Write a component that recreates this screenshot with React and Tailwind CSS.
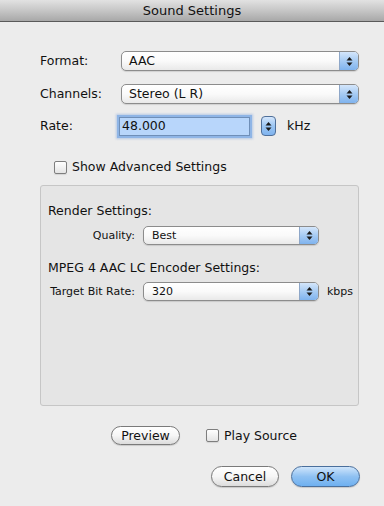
function Arrows() {
  return (
    <svg width="7" height="11" viewBox="0 0 7 11" className="block">
      <path d="M3.5 1 L6.5 4.5 L0.5 4.5 Z" fill="#1a1a1a" />
      <path d="M3.5 10 L6.5 6.5 L0.5 6.5 Z" fill="#1a1a1a" />
    </svg>
  );
}

function Popup({ value, small = false }) {
  return (
    <div
      className={`flex w-full items-stretch overflow-hidden rounded-[5px] border border-[#8c8c8c] bg-gradient-to-b from-white via-[#fafafa] to-[#e9e9e9] shadow-[0_1px_1px_rgba(0,0,0,0.12)] ${
        small ? "h-[19px] text-[11px]" : "h-[20px] text-[12.5px]"
      }`}
    >
      <span className={`flex flex-1 items-center ${small ? "pl-[8px]" : "pl-[7px]"}`}>
        {value}
      </span>
      <span className="flex w-[19px] items-center justify-center border-l border-[#8ea7c8] bg-gradient-to-b from-[#d4e6fb] via-[#a6cbf3] to-[#7fb3ee]">
        <Arrows />
      </span>
    </div>
  );
}

function Checkbox() {
  return (
    <span className="inline-block h-[13px] w-[13px] rounded-[2px] border border-[#7e7e7e] bg-gradient-to-b from-white to-[#e4e4e4] shadow-[0_1px_1px_rgba(0,0,0,0.1)]" />
  );
}

function PushButton({ label, primary = false, className = "" }) {
  return (
    <div
      className={`flex items-center justify-center rounded-full border text-[12.5px] shadow-[0_1px_1px_rgba(0,0,0,0.15)] ${
        primary
          ? "border-[#4a6f9c] bg-gradient-to-b from-[#cfe5fb] via-[#8fc1f2] to-[#6eb0f0]"
          : "border-[#7a7a7a] bg-gradient-to-b from-white via-[#f6f6f6] to-[#dcdcdc]"
      } ${className}`}
    >
      {label}
    </div>
  );
}

function SmallRow({ label, value, unit }) {
  return (
    <div className="flex items-center">
      <span className="flex w-[95px] shrink-0 justify-end whitespace-nowrap pr-[8px] text-[11px]">
        {label}
      </span>
      <div className="w-[176px] shrink-0">
        <Popup value={value} small />
      </div>
      {unit && <span className="ml-[8px] text-[11px]">{unit}</span>}
    </div>
  );
}

export default function App() {
  return (
    <div className="flex h-[506px] w-[384px] flex-col bg-[#ececec] font-['DejaVu_Sans',sans-serif] text-[12.5px] leading-[16px] text-[#111]">
      <div className="flex h-[22px] items-center justify-center border-b border-[#5a5a5a] bg-gradient-to-b from-[#e2e2e2] via-[#c6c6c6] to-[#a8a8a8] text-[13px] text-[#111]">
        Sound Settings
      </div>

      <div className="mt-[29px] flex items-center pl-[40px] pr-[25px]">
        <span className="w-[81px]">Format:</span>
        <div className="flex-1">
          <Popup value="AAC" />
        </div>
      </div>

      <div className="mt-[13px] flex items-center pl-[40px] pr-[25px]">
        <span className="w-[81px]">Channels:</span>
        <div className="flex-1">
          <Popup value="Stereo (L R)" />
        </div>
      </div>

      <div className="mt-[12px] flex items-center pl-[40px]">
        <span className="w-[79px]">Rate:</span>
        <div className="flex h-[19px] w-[131px] items-center border border-[#6f8fb8] bg-[#b8d6fb] pl-[2px] shadow-[0_0_0_2px_#8fb5e6,0_0_2px_3px_rgba(120,160,220,0.45)]">
          48.000
        </div>
        <div className="ml-[11px] flex h-[20px] w-[15px] items-center justify-center rounded-[4px] border border-[#4f6f99] bg-gradient-to-b from-[#d4e6fb] via-[#9cc6f3] to-[#7fb3ee]">
          <Arrows />
        </div>
        <span className="ml-[11px]">kHz</span>
      </div>

      <div className="mt-[23px] flex items-center gap-[5px] pl-[54px]">
        <Checkbox />
        <span>Show Advanced Settings</span>
      </div>

      <div className="ml-[40px] mr-[25px] mt-[10px] flex h-[221px] flex-col rounded-[3px] border border-[#c6c6c6] bg-[#e5e5e5] pt-[17px] pl-[7px]">
        <span>Render Settings:</span>
        <div className="mt-[7px]">
          <SmallRow label="Quality:" value="Best" />
        </div>

        <span className="mt-[15px]">MPEG 4 AAC LC Encoder Settings:</span>
        <div className="mt-[6px]">
          <SmallRow label="Target Bit Rate:" value="320" unit="kbps" />
        </div>
      </div>

      <div className="mt-[20px] flex items-center pl-[111px]">
        <PushButton label="Preview" className="h-[19px] w-[69px]" />
        <div className="ml-[26px] flex items-center gap-[5px]">
          <Checkbox />
          <span>Play Source</span>
        </div>
      </div>

      <div className="mt-[21px] flex items-center justify-end gap-[12px] pr-[24px]">
        <PushButton label="Cancel" className="h-[21px] w-[68px]" />
        <PushButton label="OK" primary className="h-[21px] w-[69px]" />
      </div>
    </div>
  );
}
